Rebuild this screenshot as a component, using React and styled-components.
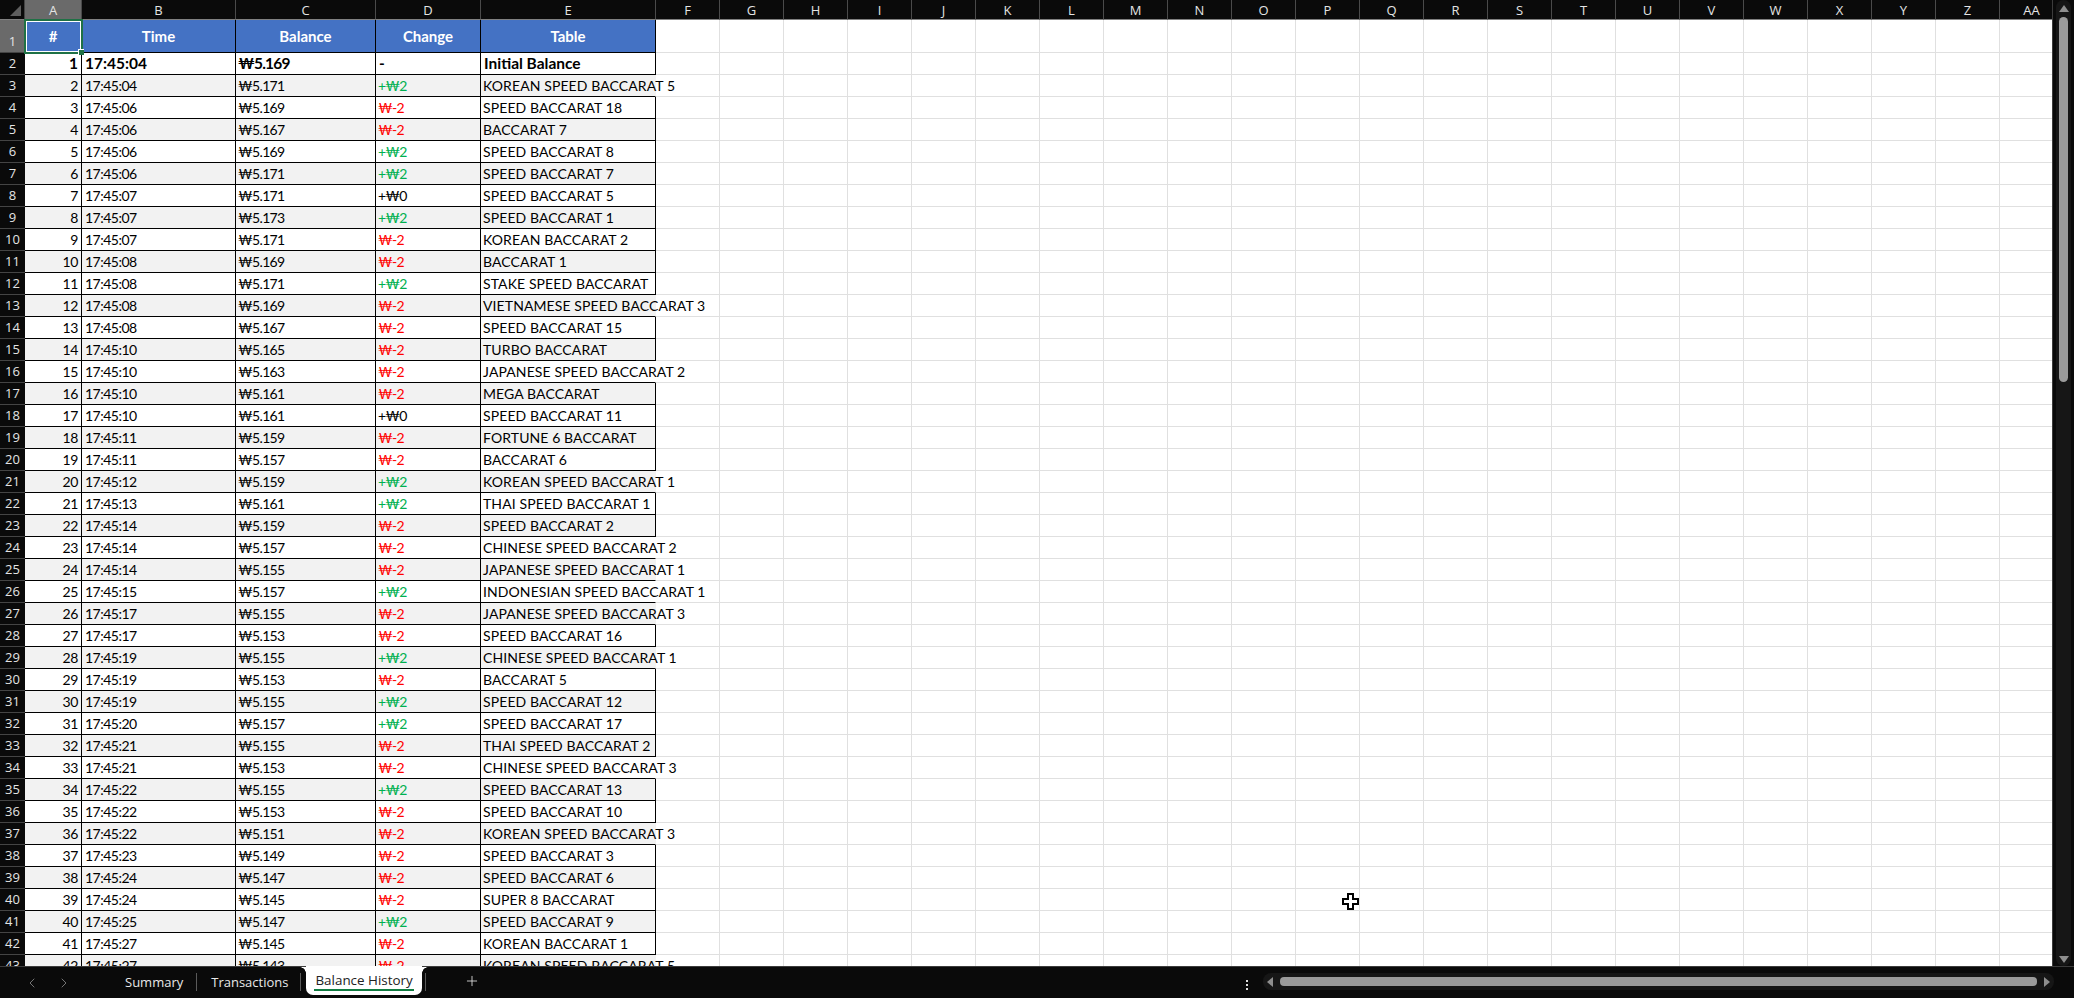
import React from "react";
import styled, { createGlobalStyle } from "styled-components";
import { ChevronLeft, ChevronRight, Plus } from "lucide-react";

const CELL_FONT = `"Lato", "Noto Sans CJK KR", sans-serif`;
const UI_FONT = `"Open Sans", "Noto Sans", sans-serif`;

const GlobalStyle = createGlobalStyle`
  html, body {
    margin: 0;
    height: 100%;
    background: #0a0a0a;
    overflow: hidden;
  }
  * {
    box-sizing: border-box;
  }
`;

const Window = styled.div`
  width: 2074px;
  height: 998px;
  display: flex;
  flex-direction: column;
  position: relative;
`;

const SheetArea = styled.div`
  flex: 1;
  min-height: 0;
  display: flex;
`;

const Sheet = styled.div`
  width: 2052px;
  overflow: hidden;
  background: #fff;
`;

const Row = styled.div`
  display: flex;
  height: ${props => props.$height}px;
`;

const Corner = styled.div`
  width: 25px;
  flex: none;
  background: #0a0a0a;
  border-bottom: 1px solid #808080;
  border-right: 1px solid #444;
  padding: 5px 0 0 10px;
`;

const Triangle = styled.div`
  width: 0;
  height: 0;
  border-left: 11px solid transparent;
  border-bottom: 11px solid #5e5e5e;
`;

const ColumnLabel = styled.div`
  width: ${props => props.$width}px;
  flex: none;
  display: flex;
  align-items: center;
  justify-content: center;
  background: ${props => (props.$active ? "#6a6a6a" : "#0a0a0a")};
  color: #e4e4e4;
  border-right: 1px solid #4a4a4a;
  border-bottom: 1px solid #808080;
  font: 13px ${UI_FONT};
`;

const RowLabel = styled.div`
  width: 25px;
  flex: none;
  display: flex;
  align-items: flex-end;
  justify-content: center;
  padding-bottom: 2px;
  background: ${props => (props.$active ? "#6a6a6a" : "#0a0a0a")};
  color: #e4e4e4;
  border-bottom: 1px solid #444;
  font: 13px/17px ${UI_FONT};
`;

const Cell = styled.div`
  width: ${props => props.$width}px;
  flex: none;
  display: flex;
  align-items: center;
  justify-content: ${props => (props.$right ? "flex-end" : "flex-start")};
  padding: 0 ${props => (props.$right ? 3 : 0)}px 0 ${props => props.$pad || 2}px;
  background: ${props => (props.$band ? "#f2f2f2" : "#fff")};
  color: ${props => props.$color || "#000"};
  border-bottom: 1px solid #000;
  border-right: 1px solid ${props => (props.$spill ? "transparent" : "#000")};
  font: ${props => (props.$bold ? "700 15.5px" : "400 14px")}/21px ${CELL_FONT};
  letter-spacing: ${props => props.$track || 0}px;
  white-space: nowrap;
  position: relative;
`;

const Spill = styled.span`
  position: relative;
  z-index: 2;
`;

const HeadCell = styled.div`
  width: ${props => props.$width}px;
  flex: none;
  display: flex;
  align-items: center;
  justify-content: center;
  padding-bottom: 1px;
  background: #4472c4;
  color: #fff;
  border-right: 1px solid #000;
  border-bottom: 1px solid #000;
  font: 700 15px ${CELL_FONT};
`;

const EmptyCell = styled.div`
  width: 64px;
  flex: none;
  border-right: 1px solid #e0e0e0;
  border-bottom: 1px solid #e0e0e0;
`;

/* selection box round A1, sits over the sheet */
const Selection = styled.div`
  position: absolute;
  left: 24px;
  top: 19px;
  width: 59px;
  height: 35px;
  border: 2px solid #1f7145;
  box-shadow: inset 0 0 0 1px #fff;
  pointer-events: none;
`;

const Handle = styled.div`
  position: absolute;
  right: -3px;
  bottom: -3px;
  width: 6px;
  height: 6px;
  background: #1f7145;
  border: 1px solid #fff;
  border-width: 1px 0 0 1px;
`;

const CursorMark = styled.svg`
  position: absolute;
  left: 1342px;
  top: 893px;
`;

const VScroll = styled.div`
  width: 22px;
  flex: none;
  background: #0a0a0a;
  border-left: 1px solid #3c3c3c;
  padding: 0 3px;
`;

const VTrack = styled.div`
  height: 100%;
  background: #161616;
  border-radius: 8px;
  display: flex;
  flex-direction: column;
  align-items: center;
  padding: 5px 0 3px;
`;

const VArrow = styled.div`
  width: 0;
  height: 0;
  border-left: 5px solid transparent;
  border-right: 5px solid transparent;
  ${props =>
    props.$down
      ? "border-top: 7px solid #8e8e8e; margin-top: auto;"
      : "border-bottom: 7px solid #8e8e8e;"}
`;

const VThumb = styled.div`
  width: 9px;
  height: 365px;
  margin-top: 5px;
  background: #9b9b9b;
  border-radius: 5px;
`;

const TabBar = styled.div`
  height: 32px;
  flex: none;
  display: flex;
  align-items: flex-start;
  background: #0a0a0a;
  border-top: 1px solid #3c3c3c;
  color: #e8e8e8;
  font: 13px ${UI_FONT};
`;

const NavButtons = styled.div`
  width: 125px;
  flex: none;
  display: flex;
  gap: 16px;
  padding: 8px 0 0 24px;
  color: #8a8a8a;
`;

const Tab = styled.div`
  height: 27px;
  display: flex;
  align-items: center;
  padding: 3px 0 0;
  margin: 0 ${props => props.$after || 0}px 0 ${props => props.$before || 0}px;
`;

const ActiveTab = styled.div`
  height: 29px;
  margin: -1px 0 0 5px;
  padding: 0 9px 2px;
  display: flex;
  align-items: center;
  position: relative;
  background: #fff;
  color: #222;
  font-size: 13.4px;
  border-radius: 0 0 7px 7px;

  &::before,
  &::after {
    content: "";
    position: absolute;
    top: 1px;
    width: 6px;
    height: 6px;
  }
  &::before {
    left: -6px;
    background: radial-gradient(circle at 0 100%, transparent 5.5px, #fff 6px);
  }
  &::after {
    right: -6px;
    background: radial-gradient(circle at 100% 100%, transparent 5.5px, #fff 6px);
  }
`;

const TabUnderline = styled.div`
  position: absolute;
  left: 8px;
  right: 8px;
  bottom: 4px;
  height: 2px;
  background: #107c41;
`;

const TabDivider = styled.div`
  width: 1px;
  height: 18px;
  margin: 6px 0 0 ${props => props.$before || 0}px;
  background: #5a5a5a;
`;

const AddSheet = styled.div`
  margin: 6px 0 0 38px;
  color: #e8e8e8;
  display: flex;
`;

const BarRight = styled.div`
  margin-left: auto;
  display: flex;
  align-items: flex-start;
  padding-right: 20px;
`;

const MoreDots = styled.div`
  width: 2px;
  height: 2px;
  margin: 13px 15px 0 0;
  background: #ddd;
  box-shadow: 0 4px 0 #ddd, 0 8px 0 #ddd;
`;

const HTrack = styled.div`
  width: 791px;
  height: 17px;
  margin-top: 6px;
  background: #161616;
  border-radius: 8px;
  display: flex;
  align-items: center;
  padding: 0 4px;
`;

const HArrow = styled.div`
  width: 0;
  height: 0;
  border-top: 5px solid transparent;
  border-bottom: 5px solid transparent;
  ${props =>
    props.$right
      ? "border-left: 6px solid #8e8e8e;"
      : "border-right: 6px solid #8e8e8e;"}
`;

const HThumb = styled.div`
  flex: 1;
  height: 9px;
  margin: 0 7px;
  background: #9b9b9b;
  border-radius: 4px;
`;

const columns = [
  { key: "A", width: 57, title: "#" },
  { key: "B", width: 154, title: "Time" },
  { key: "C", width: 140, title: "Balance" },
  { key: "D", width: 105, title: "Change" },
  { key: "E", width: 175, title: "Table" }
];

const emptyColumns = "F G H I J K L M N O P Q R S T U V W X Y Z AA".split(" ");

const history = [
  ["17:45:04", "5.171", "+2", "KOREAN SPEED BACCARAT 5"],
  ["17:45:06", "5.169", "-2", "SPEED BACCARAT 18"],
  ["17:45:06", "5.167", "-2", "BACCARAT 7"],
  ["17:45:06", "5.169", "+2", "SPEED BACCARAT 8"],
  ["17:45:06", "5.171", "+2", "SPEED BACCARAT 7"],
  ["17:45:07", "5.171", "+0", "SPEED BACCARAT 5"],
  ["17:45:07", "5.173", "+2", "SPEED BACCARAT 1"],
  ["17:45:07", "5.171", "-2", "KOREAN BACCARAT 2"],
  ["17:45:08", "5.169", "-2", "BACCARAT 1"],
  ["17:45:08", "5.171", "+2", "STAKE SPEED BACCARAT"],
  ["17:45:08", "5.169", "-2", "VIETNAMESE SPEED BACCARAT 3"],
  ["17:45:08", "5.167", "-2", "SPEED BACCARAT 15"],
  ["17:45:10", "5.165", "-2", "TURBO BACCARAT"],
  ["17:45:10", "5.163", "-2", "JAPANESE SPEED BACCARAT 2"],
  ["17:45:10", "5.161", "-2", "MEGA BACCARAT"],
  ["17:45:10", "5.161", "+0", "SPEED BACCARAT 11"],
  ["17:45:11", "5.159", "-2", "FORTUNE 6 BACCARAT"],
  ["17:45:11", "5.157", "-2", "BACCARAT 6"],
  ["17:45:12", "5.159", "+2", "KOREAN SPEED BACCARAT 1"],
  ["17:45:13", "5.161", "+2", "THAI SPEED BACCARAT 1"],
  ["17:45:14", "5.159", "-2", "SPEED BACCARAT 2"],
  ["17:45:14", "5.157", "-2", "CHINESE SPEED BACCARAT 2"],
  ["17:45:14", "5.155", "-2", "JAPANESE SPEED BACCARAT 1"],
  ["17:45:15", "5.157", "+2", "INDONESIAN SPEED BACCARAT 1"],
  ["17:45:17", "5.155", "-2", "JAPANESE SPEED BACCARAT 3"],
  ["17:45:17", "5.153", "-2", "SPEED BACCARAT 16"],
  ["17:45:19", "5.155", "+2", "CHINESE SPEED BACCARAT 1"],
  ["17:45:19", "5.153", "-2", "BACCARAT 5"],
  ["17:45:19", "5.155", "+2", "SPEED BACCARAT 12"],
  ["17:45:20", "5.157", "+2", "SPEED BACCARAT 17"],
  ["17:45:21", "5.155", "-2", "THAI SPEED BACCARAT 2"],
  ["17:45:21", "5.153", "-2", "CHINESE SPEED BACCARAT 3"],
  ["17:45:22", "5.155", "+2", "SPEED BACCARAT 13"],
  ["17:45:22", "5.153", "-2", "SPEED BACCARAT 10"],
  ["17:45:22", "5.151", "-2", "KOREAN SPEED BACCARAT 3"],
  ["17:45:23", "5.149", "-2", "SPEED BACCARAT 3"],
  ["17:45:24", "5.147", "-2", "SPEED BACCARAT 6"],
  ["17:45:24", "5.145", "-2", "SUPER 8 BACCARAT"],
  ["17:45:25", "5.147", "+2", "SPEED BACCARAT 9"],
  ["17:45:27", "5.145", "-2", "KOREAN BACCARAT 1"],
  ["17:45:27", "5.143", "-2", "KOREAN SPEED BACCARAT 5"]
];

const changeText = value =>
  value[0] === "+" ? `+₩${value.slice(1)}` : `₩${value}`;

const changeColor = value => {
  if (value === "+0") return "#000";
  return value[0] === "+" ? "#00b050" : "#ff0000";
};

// names too long for column E run on into F and drop the border
const spills = name => name.length > 21 && !name.startsWith("THAI");

const EmptyCells = () => emptyColumns.map(c => <EmptyCell key={c} />);

const HistoryRow = ({ index, entry }) => {
  const [time, balance, change, table] = entry;
  const band = index % 2 === 0;
  return (
    <Row $height={22}>
      <RowLabel>{index + 1}</RowLabel>
      <Cell $width={57} $band={band} $right $track={-0.4}>{index}</Cell>
      <Cell $width={154} $band={band} $pad={3} $track={-0.5}>{time}</Cell>
      <Cell $width={140} $band={band} $track={-0.7}>₩{balance}</Cell>
      <Cell $width={105} $band={band} $color={changeColor(change)} $track={-0.8}>
        {changeText(change)}
      </Cell>
      <Cell $width={175} $band={band} $spill={spills(table)} $track={0.1}>
        <Spill>{table}</Spill>
      </Cell>
      <EmptyCells />
    </Row>
  );
};

const App = () => (
  <Window>
    <GlobalStyle />
    <SheetArea>
      <Sheet>
        <Row $height={20}>
          <Corner>
            <Triangle />
          </Corner>
          {columns.map((c, i) => (
            <ColumnLabel key={c.key} $width={c.width} $active={i === 0}>
              {c.key}
            </ColumnLabel>
          ))}
          {emptyColumns.map(c => (
            <ColumnLabel key={c} $width={64}>{c}</ColumnLabel>
          ))}
        </Row>
        <Row $height={33}>
          <RowLabel $active>1</RowLabel>
          {columns.map(c => (
            <HeadCell key={c.key} $width={c.width}>{c.title}</HeadCell>
          ))}
          <EmptyCells />
        </Row>
        <Row $height={22}>
          <RowLabel>2</RowLabel>
          <Cell $width={57} $right $bold>1</Cell>
          <Cell $width={154} $pad={3} $bold>17:45:04</Cell>
          <Cell $width={140} $bold $track={-0.8}>₩5.169</Cell>
          <Cell $width={105} $pad={3} $bold>-</Cell>
          <Cell $width={175} $pad={3} $bold>Initial Balance</Cell>
          <EmptyCells />
        </Row>
        {history.map((entry, i) => (
          <HistoryRow key={i} index={i + 2} entry={entry} />
        ))}
      </Sheet>
      <VScroll>
        <VTrack>
          <VArrow />
          <VThumb />
          <VArrow $down />
        </VTrack>
      </VScroll>
    </SheetArea>
    <TabBar>
      <NavButtons>
        <ChevronLeft size={16} strokeWidth={1.25} />
        <ChevronRight size={16} strokeWidth={1.25} />
      </NavButtons>
      <Tab $after={13}>Summary</Tab>
      <TabDivider />
      <Tab $before={14} $after={12}>Transactions</Tab>
      <TabDivider />
      <ActiveTab>
        Balance History
        <TabUnderline />
      </ActiveTab>
      <TabDivider $before={3} />
      <AddSheet>
        <Plus size={16} strokeWidth={1.25} />
      </AddSheet>
      <BarRight>
        <MoreDots />
        <HTrack>
          <HArrow />
          <HThumb />
          <HArrow $right />
        </HTrack>
      </BarRight>
    </TabBar>
    <Selection>
      <Handle />
    </Selection>
    <CursorMark width="17" height="17" viewBox="0 0 17 17">
      <path
        d="M6 1h5v5h5v5h-5v5H6v-5H1V6h5z"
        fill="#fff"
        stroke="#000"
        strokeWidth="2"
      />
    </CursorMark>
  </Window>
);

export default App;
